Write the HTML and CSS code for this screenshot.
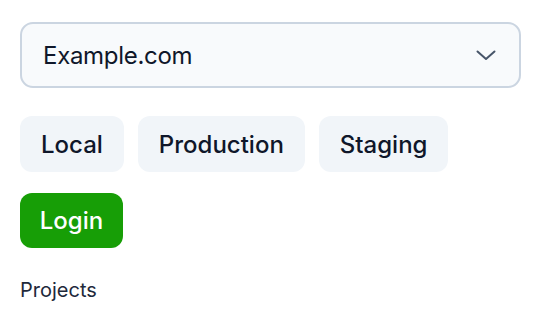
FILE: index.html
```html
<!DOCTYPE html>
<html>
<head>
<meta charset="utf-8">
<link rel="stylesheet" href="styles.css">
</head>
<body>
<main class="panel">
  <div class="select">
    <span class="select-value">Example.com</span>
    <svg class="chevron" width="22" height="14" viewBox="0 0 22 14"><path d="M2.5 3.5 L11 11 L19.5 3.5" fill="none" stroke="#475569" stroke-width="2" stroke-linecap="round" stroke-linejoin="round"/></svg>
  </div>
  <div class="envs">
    <button class="env">Local</button>
    <button class="env">Production</button>
    <button class="env">Staging</button>
  </div>
  <button class="login">Login</button>
  <div class="projects">Projects</div>
</main>
</body>
</html>
```
FILE: styles.css
```css
html, body {
  margin: 0;
  padding: 0;
  background: #ffffff;
}
body {
  font-family: Inter, "Noto Sans", sans-serif;
  color: #0f172a;
}
.panel {
  padding: 22px 18px 0 20px;
  display: flex;
  flex-direction: column;
  align-items: flex-start;
}
.select {
  box-sizing: border-box;
  width: 501px;
  height: 66px;
  border: 2px solid #cbd5e1;
  border-radius: 13px;
  background: #f8fafc;
  display: flex;
  align-items: center;
  justify-content: space-between;
  padding: 0 22px 0 21px;
}
.select-value {
  font-size: 24px;
  font-weight: 400;
  letter-spacing: -0.3px;
}
.chevron {
  display: block;
}
.envs {
  display: flex;
  gap: 14px;
  margin-top: 28px;
}
.env, .login {
  box-sizing: border-box;
  height: 56px;
  border: none;
  border-radius: 12px;
  padding: 0 21px;
  font-family: inherit;
  font-size: 24px;
  font-weight: 500;
  letter-spacing: 0;
  background: #f1f5f9;
  color: #0f172a;
}
.login {
  margin-top: 21px;
  height: 55px;
  background: #179e06;
  color: #ffffff;
  width: 103px;
  padding: 0;
}
.projects {
  margin-top: 30px;
  font-size: 20px;
  color: #1e293b;
}
```
